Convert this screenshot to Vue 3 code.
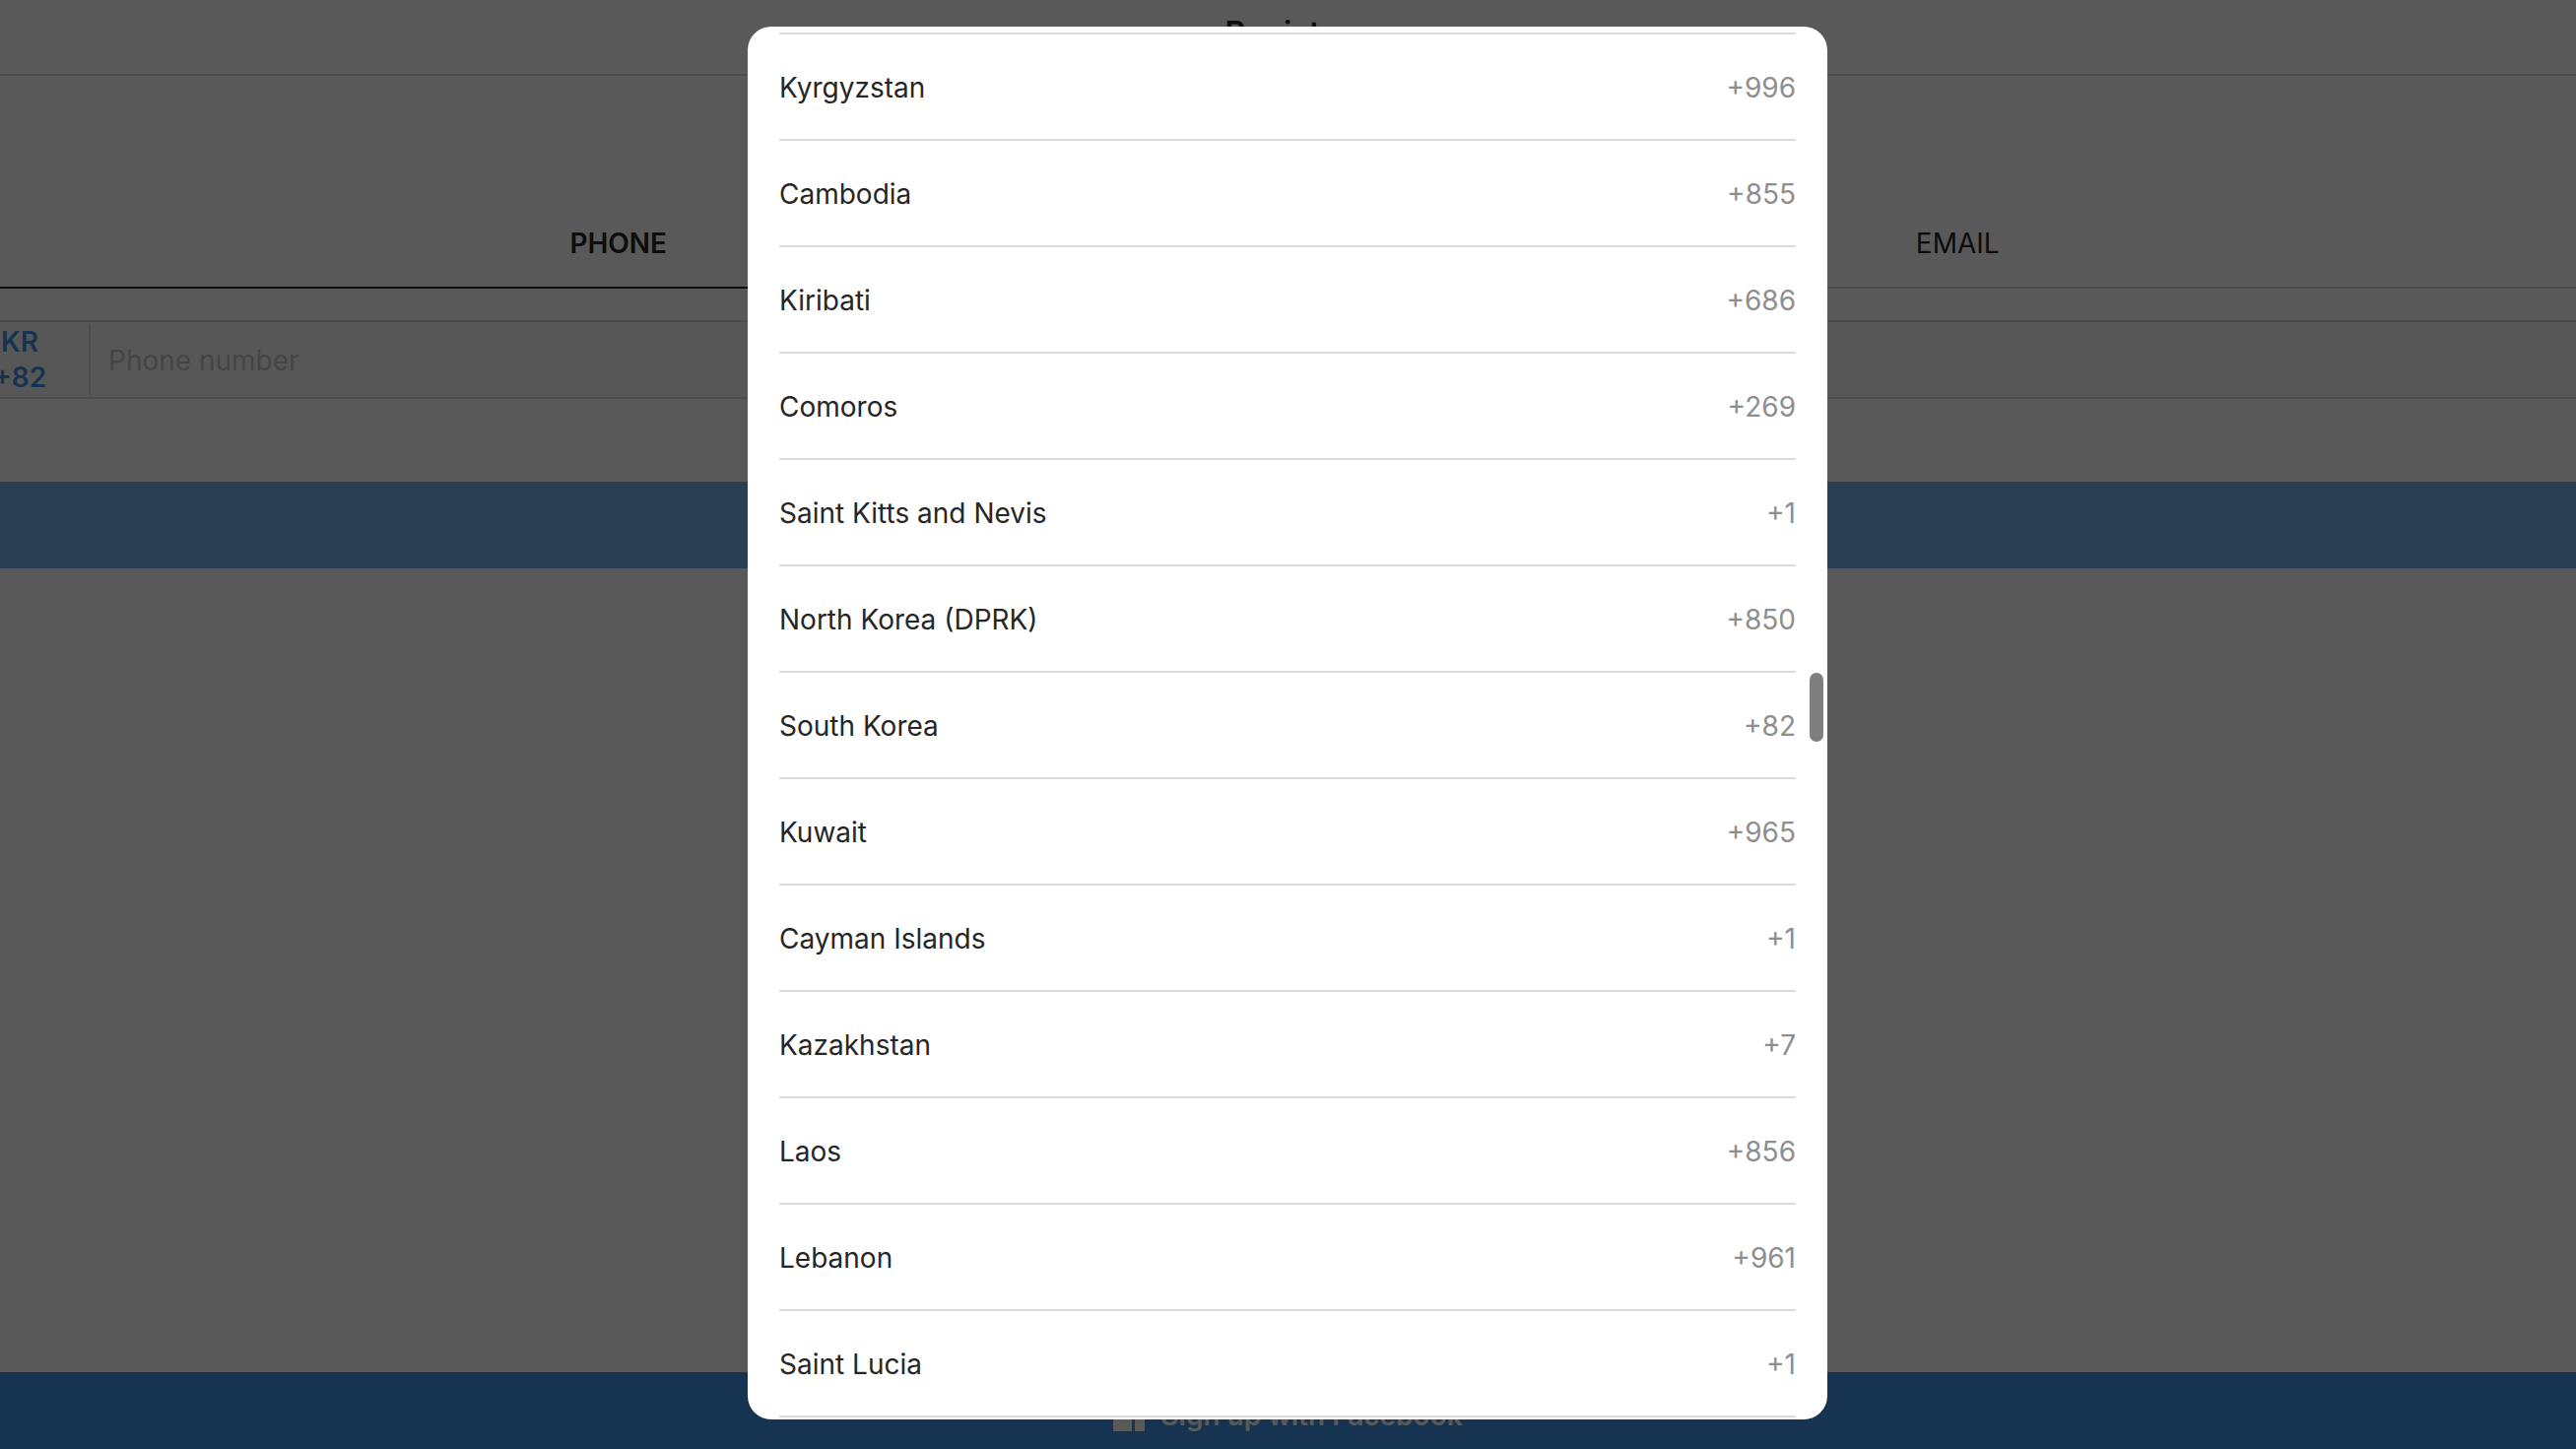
<script setup>
const countries = [
  { name: 'Kyrgyzstan', code: '+996' },
  { name: 'Cambodia', code: '+855' },
  { name: 'Kiribati', code: '+686' },
  { name: 'Comoros', code: '+269' },
  { name: 'Saint Kitts and Nevis', code: '+1' },
  { name: 'North Korea (DPRK)', code: '+850' },
  { name: 'South Korea', code: '+82' },
  { name: 'Kuwait', code: '+965' },
  { name: 'Cayman Islands', code: '+1' },
  { name: 'Kazakhstan', code: '+7' },
  { name: 'Laos', code: '+856' },
  { name: 'Lebanon', code: '+961' },
  { name: 'Saint Lucia', code: '+1' },
]
</script>

<template>
  <div class="page">
    <header class="header">
      <h1 class="title">Register</h1>
    </header>

    <form class="form" @submit.prevent>
      <div class="tabs">
        <button type="button" class="tab active">PHONE</button>
        <button type="button" class="tab">EMAIL</button>
      </div>
      <div class="field">
        <button type="button" class="country"><span>KR</span><span>+82</span></button>
        <input class="phone" type="tel" placeholder="Phone number" aria-label="Phone number" />
      </div>
      <button type="submit" class="next">Next</button>
    </form>

    <footer class="footer">
      <button type="button" class="facebook">
        <svg class="logo" viewBox="0 0 32 32" aria-hidden="true">
          <path d="M1 0h30a1 1 0 0 1 1 1v30a1 1 0 0 1-1 1h-9V20h4l1-5h-5v-3c0-2 1-3 3-3h2V5h-4c-4 0-4 3-4 7v3h-4v5h4v12H1a1 1 0 0 1-1-1V1a1 1 0 0 1 1-1z" fill="currentColor" />
        </svg>
        <span>Sign up with Facebook</span>
      </button>
    </footer>

    <div class="overlay">
      <div class="dialog" role="dialog" aria-label="Country">
        <ul class="list">
          <li v-for="c in countries" :key="c.name" class="item">
            <button type="button" class="row">
              <span>{{ c.name }}</span>
              <span class="code">{{ c.code }}</span>
            </button>
          </li>
        </ul>
        <div class="thumb"></div>
      </div>
    </div>
  </div>
</template>

<style>
body {
  margin: 0;
  background: #fff;
}
</style>

<style scoped>
* {
  box-sizing: border-box;
}
.page {
  position: relative;
  display: flex;
  flex-direction: column;
  height: 100vh;
  overflow: hidden;
  font-family: Inter, "Liberation Sans", sans-serif;
  font-size: 28px;
  line-height: 36px;
  color: #262626;
}
button,
input {
  margin: 0;
  padding: 0;
  border: 0;
  background: none;
  font: inherit;
  color: inherit;
}
.header {
  display: flex;
  justify-content: center;
  padding: 16px 0 23px;
  border-bottom: 2px solid #dbdbdb;
}
.title {
  margin: 0;
  font-size: 32px;
  line-height: 36px;
  font-weight: 600;
}
.form {
  display: flex;
  flex-direction: column;
  margin: 124px -52px 0;
}
.tabs {
  display: flex;
}
.tab {
  flex: 1;
  height: 92px;
  padding-top: 2px;
  border-bottom: 2px solid #dbdbdb;
}
.tab.active {
  border-bottom-color: #262626;
  font-weight: 600;
}
.field {
  display: flex;
  align-items: center;
  height: 80px;
  margin-top: 32px;
  border: 2px solid #dbdbdb;
  background: #fafafa;
}
.country {
  display: flex;
  flex-direction: column;
  align-items: center;
  width: 142px;
  height: 72px;
  border-right: 2px solid #dbdbdb;
  color: #4593e9;
  font-weight: 600;
}
.phone {
  flex: 1;
  height: 72px;
  padding: 2px 18px 0;
}
.phone::placeholder {
  color: #c7c7c7;
  opacity: 1;
}
.next {
  height: 88px;
  margin-top: 84px;
  background: #7bb4f0;
  color: #fff;
  font-weight: 600;
}
.footer {
  height: 78px;
  margin-top: auto;
}
.facebook {
  display: flex;
  align-items: center;
  justify-content: center;
  gap: 16px;
  width: 100%;
  height: 88px;
  background: #4192ea;
  color: #fff;
  font-weight: 600;
}
.logo {
  width: 32px;
  height: 32px;
}
.overlay {
  position: absolute;
  inset: 0;
  display: flex;
  align-items: flex-start;
  justify-content: center;
  padding: 27px 33px 30px 32px;
  background: rgba(0, 0, 0, 0.65);
}
.dialog {
  position: relative;
  width: 100%;
  max-width: 1096px;
  padding: 6px 32px 2px;
  border-radius: 24px;
  background: #fff;
}
.list {
  margin: 0;
  padding: 0;
  list-style: none;
  border-top: 2px solid #dbdbdb;
}
.item {
  border-bottom: 2px solid #dbdbdb;
}
.row {
  display: flex;
  align-items: center;
  justify-content: space-between;
  width: 100%;
  height: 106px;
  padding-top: 2px;
}
.code {
  color: #8e8e8e;
}
.thumb {
  position: absolute;
  top: 656px;
  right: 4px;
  width: 14px;
  height: 70px;
  border-radius: 7px;
  background: #7f7f7f;
}
</style>
